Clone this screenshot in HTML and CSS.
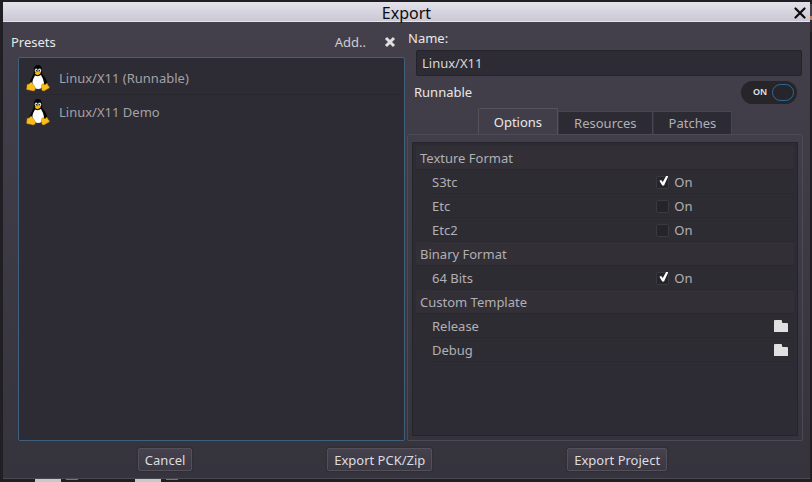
FILE: index.html
```html
<!DOCTYPE html>
<html lang="en">
<head>
<meta charset="utf-8">
<title>Export</title>
<link rel="stylesheet" href="styles.css">
</head>
<body>
<svg class="defs" aria-hidden="true">
  <symbol id="tux" viewBox="0 0 24 28">
    <path fill="#211e20" opacity=".5" d="M3 24C5 15 6 13 8 10L8 4Q12-1 16 4L16 10Q23 18 21 25Z"/>
    <path fill="#050506" d="M12 1C8.600 1 7.700 3.500 7.900 7C8.100 10 6.500 12 5 15C3.700 17.500 3 20 3.500 22.500L7 25H17L21 22C21.800 18 20 14.500 17.700 12C15.800 9.800 16 8 15.800 5C15.600 2.500 14.300 1 12 1Z"/>
    <path fill="#fff" d="M9 11.500Q12 13 15 11Q17.500 15 18 19Q17 25 12 25Q8.500 25 7 22Q5.500 18 7.200 15Z"/>
    <ellipse cx="10.200" cy="6.500" rx="1.500" ry="2" fill="#d8d8d8"/>
    <ellipse cx="13.600" cy="6.500" rx="1.700" ry="2" fill="#d8d8d8"/>
    <circle cx="10.500" cy="6.700" r=".8" fill="#111"/>
    <circle cx="13.300" cy="6.700" r=".8" fill="#111"/>
    <path fill="#f5b811" d="M8.600 9Q11.500 6.500 15 8.600Q15 10 11.800 11.200Q9.500 11 8.600 9Z"/>
    <path fill="#f8bd18" stroke="#a66b08" stroke-width=".4" d="M1 20.500Q3.500 20.500 4.500 18.500Q6 17.700 7 20L9.500 24Q9.500 27 7 27Q4 26 1 25.700Q0 25.300.800 23.500Z"/>
    <path fill="#f8bd18" stroke="#a66b08" stroke-width=".4" d="M15.700 20.500Q16.500 19 18 20.500Q20 21 20.700 19Q21.700 19.500 22 21.500L23.700 23Q23 24.500 20.500 25.500Q18.500 27.500 16.500 26.800Q15 26 15.700 20.500Z"/>
  </symbol>
  <symbol id="folder" viewBox="0 0 14 12">
    <path fill="#e0e0e0" d="M0 1Q0 0 1 0H7Q8 0 8 1V2Q8 3 9 3H13Q14 3 14 4V12H0Z"/>
  </symbol>
</svg>

<div class="backdrop" aria-hidden="true">
  <span class="tile"></span><span class="chip"></span>
  <span class="tile"></span><span class="chip"></span>
</div>
<div class="edge" aria-hidden="true"></div>

<main class="dialog" role="dialog" aria-labelledby="title">
  <header class="titlebar">
    <h1 id="title">Export</h1>
    <button class="close" aria-label="Close"><svg viewBox="0 0 12 12"><path d="M1.500 1.500L10.500 10.500M10.500 1.500L1.500 10.500" stroke="#0c0c0e" stroke-width="2.200" stroke-linecap="round"/></svg></button>
  </header>

  <div class="content">
    <section class="presets">
      <div class="presets-head">
        <h2>Presets</h2>
        <button class="flat">Add..</button>
        <button class="flat" aria-label="Remove preset"><svg class="remove" viewBox="0 0 12 12"><path d="M2 2L10 10M10 2L2 10" stroke="#e0e0e0" stroke-width="3"/></svg></button>
      </div>
      <ul class="tree">
        <li><svg class="tux"><use href="#tux"/></svg>Linux/X11 (Runnable)</li>
        <li><svg class="tux"><use href="#tux"/></svg>Linux/X11 Demo</li>
      </ul>
    </section>

    <section class="settings">
      <label class="name-label" for="name">Name:</label>
      <input class="name" id="name" type="text" value="Linux/X11">
      <div class="runnable">
        <label for="runnable">Runnable</label>
        <span class="switch">
          <input id="runnable" type="checkbox" role="switch" checked>
          <span class="switch-text">ON</span><span class="knob"></span>
        </span>
      </div>
      <div class="tabs" role="tablist">
        <button class="tab active" role="tab" aria-selected="true">Options</button>
        <button class="tab" role="tab" aria-selected="false">Resources</button>
        <button class="tab" role="tab" aria-selected="false">Patches</button>
      </div>
      <div class="panel" role="tabpanel">
        <div class="inspector">
          <table>
            <colgroup><col class="col-name"><col></colgroup>
            <tbody>
              <tr><th colspan="2">Texture Format</th></tr>
              <tr><td>S3tc</td><td><label class="check"><input type="checkbox" checked>On</label></td></tr>
              <tr><td>Etc</td><td><label class="check"><input type="checkbox">On</label></td></tr>
              <tr><td>Etc2</td><td><label class="check"><input type="checkbox">On</label></td></tr>
              <tr><th colspan="2">Binary Format</th></tr>
              <tr><td>64 Bits</td><td><label class="check"><input type="checkbox" checked>On</label></td></tr>
              <tr><th colspan="2">Custom Template</th></tr>
              <tr><td>Release</td><td><button class="browse" aria-label="Browse release template"><svg><use href="#folder"/></svg></button></td></tr>
              <tr><td>Debug</td><td><button class="browse" aria-label="Browse debug template"><svg><use href="#folder"/></svg></button></td></tr>
            </tbody>
          </table>
        </div>
      </div>
    </section>
  </div>

  <footer class="actions">
    <button class="btn">Cancel</button>
    <button class="btn">Export PCK/Zip</button>
    <button class="btn">Export Project</button>
  </footer>
</main>
</body>
</html>
```
FILE: styles.css
```css
* { box-sizing: border-box; }

body {
  margin: 0;
  height: 100vh;
  padding: 2px 2px 3px 3px;
  display: flex;
  background: #211e24;
  color: #e8e8e8;
  font: 13px/20px "Noto Sans", "Open Sans", sans-serif;
  overflow: hidden;
}

button, input { font: inherit; color: inherit; margin: 0; }
button { border: 0; padding: 0; background: none; }
h1, h2, ul { margin: 0; padding: 0; font-weight: normal; }
.defs { position: absolute; width: 0; height: 0; }

.backdrop {
  position: absolute;
  left: 0;
  right: 0;
  bottom: 0;
  height: 3px;
  padding-left: 35px;
  display: flex;
}
.tile { width: 26px; background: #c9c7c9; }
.chip { width: 12px; height: 1px; margin: 0 57px 0 5px; background: #77747a; }
.edge {
  position: absolute;
  right: 0;
  top: 4px;
  width: 2px;
  height: 28px;
  background: linear-gradient(#44414c 12px, #c47a5a 12px, #c47a5a 16px, #2d2a32 16px);
}

.dialog {
  position: relative;
  flex: 1;
  display: flex;
  flex-direction: column;
  background: linear-gradient(#43404b 20px, #35333c);
  border-bottom: 1px solid #4a4852;
}

.titlebar {
  display: grid;
  grid-template-columns: 1fr auto 1fr;
  align-items: center;
  height: 20px;
  padding-right: 4px;
  background: linear-gradient(#e3e1ea, #cac8d3);
  border-bottom: 1px solid #e6e4ec;
  color: #0c0c0e;
}
.titlebar h1 { grid-column: 2; font-size: 16px; line-height: 20px; padding: 1px 0 0 4px; }
.close { justify-self: end; display: flex; }
.close svg { width: 12px; height: 12px; }

.content { flex: 1; display: grid; grid-template-columns: 402fr 403fr; column-gap: 2px; }
.presets { display: flex; flex-direction: column; }
.presets-head { display: flex; align-items: center; height: 35px; padding: 4px 9px 0 8px; }
.presets-head h2 { flex: 1; font-size: 13px; }
.flat { display: flex; margin-left: 18px; color: #cfced3; }
.remove { width: 12px; height: 12px; }

.tree {
  flex: 1;
  margin-left: 15px;
  padding: 3px 4px;
  list-style: none;
  background: #2d2b33;
  border: 1px solid #3f617d;
  border-radius: 2px;
  color: #a3a2a6;
}
.tree li { display: flex; align-items: center; height: 34px; padding-left: 3px; gap: 9px; }
.tree li:first-child { border-bottom: 1px solid #28272b; }
.tux { width: 24px; height: 28px; }

.settings { display: flex; flex-direction: column; padding-right: 7px; }
.name-label { height: 28px; padding-top: 6px; padding-left: 1px; }
.name {
  height: 26px;
  margin: 0 1px 0 9px;
  padding: 0 5px;
  background: #2d2b33;
  border: 1px solid #242329;
  border-radius: 2px;
  color: #d9d8dc;
  outline: 0;
}
.runnable { display: flex; align-items: center; justify-content: space-between; height: 32px; padding: 0 6px 0 7px; }
.switch {
  position: relative;
  display: flex;
  align-items: center;
  gap: 5px;
  width: 56px;
  height: 23px;
  padding-left: 12px;
  border-radius: 12px;
  background: #25252a;
}
.switch input { position: absolute; inset: 0; width: 100%; height: 100%; opacity: 0; }
.switch-text { font-size: 9px; line-height: 12px; font-weight: 600; width: 14px; }
.knob { width: 22px; height: 17px; border: 1px solid #2e6b9b; border-radius: 9px; }

.tabs { display: flex; align-items: flex-end; justify-content: center; height: 26px; }
.tab {
  height: 23px;
  padding: 0 15px;
  background: #2c2a32;
  border: 1px solid #484650;
  border-bottom: 0;
  border-left-color: #383640;
  color: #b1b0b5;
}
.tab.active { height: 26px; background: #413e49; border-color: #55525e; border-radius: 2px 2px 0 0; color: #e8e8e8; }

.panel {
  flex: 1;
  display: flex;
  padding: 7px 4px 4px;
  border: 1px solid #4d4a56;
  border-radius: 2px;
  background: linear-gradient(#413e49, #35333c);
}
.inspector { flex: 1; padding: 3px; background: #2d2b33; border: 1px solid #25242a; }
table { width: 100%; table-layout: fixed; border-collapse: collapse; color: #b1b0b5; }
.col-name { width: 62%; }
th, td { height: 24px; padding: 0 0 0 4px; text-align: left; font-weight: normal; }
th { background: linear-gradient(#29282d, #29282d) 0 100% / 100% 1px no-repeat #322f37; }
td { background: linear-gradient(#29282d, #29282d) 16px 100% / 100% 1px no-repeat #2e2c33; }
td:first-child { padding-left: 16px; }
td:last-child { padding-left: 6px; background-position: 0 100%; }
.check { display: flex; align-items: center; gap: 5px; height: 23px; }
.check input {
  appearance: none;
  width: 13px;
  height: 13px;
  border: 1px solid #3a3840;
  border-radius: 2px;
  background: #252428;
}
.check input:checked::before {
  content: "";
  display: block;
  width: 9px;
  height: 10px;
  margin-left: 2px;
  margin-top: -1px;
  background: #fff;
  clip-path: polygon(0 52%, 20% 44%, 38% 66%, 78% 0, 100% 6%, 52% 100%, 32% 100%);
}
.browse { display: flex; margin: 0 6px 0 auto; }
.browse svg { width: 14px; height: 12px; }

.actions { display: flex; justify-content: space-evenly; padding: 7px 8px 7px 0; }
.btn {
  height: 23px;
  padding: 0 6px;
  background: linear-gradient(#45424e, #3a3842);
  border: 1px solid #53505c;
  border-radius: 2px;
  box-shadow: 0 0 2px #25242a;
  color: #dddce0;
}
```
